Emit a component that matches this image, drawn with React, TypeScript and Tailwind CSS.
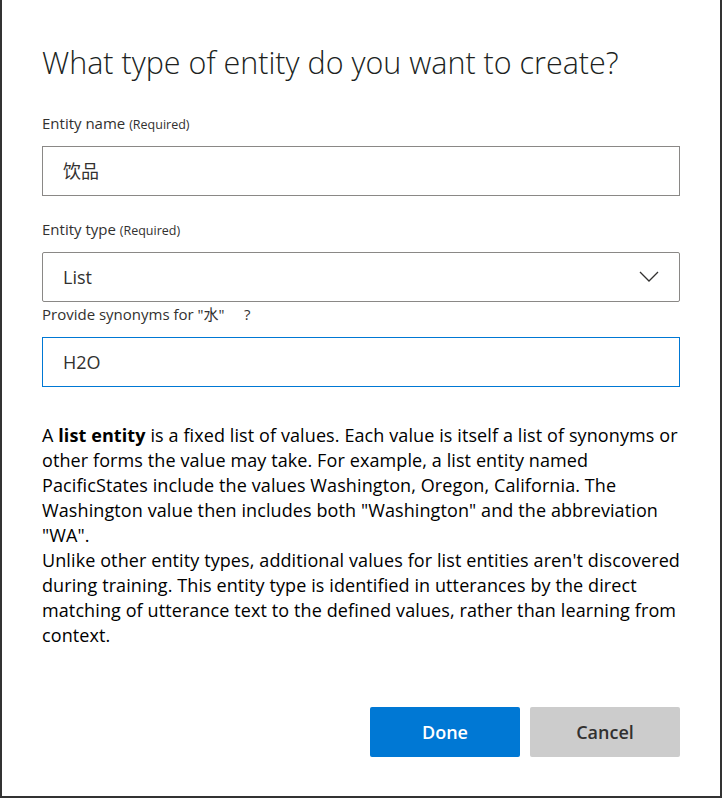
import React from "react";

const font = { fontFamily: '"Open Sans", "Noto Sans", "Noto Sans CJK SC", sans-serif' };

export default function App() {
  return (
    <div className="w-[722px] h-[798px] bg-white" style={font}>
      <div className="w-full h-full border-x-2 border-b-2 border-[#333333] box-border px-[40px] flex flex-col text-[#323130]">
        <h1 className="mt-[43px] text-[30.5px] leading-[38px] font-light text-[#201f1e] whitespace-nowrap">
          What type of entity do you want to create?
        </h1>
        <div className="mt-[32px] text-[15px] leading-[20px] h-[20px]">
          Entity name <span className="text-[12.5px] leading-none">(Required)</span>
        </div>
        <div className="mt-[13px] h-[50px] border border-[#8a8886] flex items-center px-[20px] text-[18px]">
          饮品
        </div>
        <div className="mt-[23px] text-[15px] leading-[20px] h-[20px]">
          Entity type <span className="text-[12.5px] leading-none">(Required)</span>
        </div>
        <div className="mt-[13px] h-[50px] border border-[#8a8886] rounded-[2px] flex items-center justify-between pl-[20px] pr-[20px] text-[18px]">
          <span>List</span>
          <svg width="20" height="12" viewBox="0 0 20 12" fill="none">
            <path d="M1 1 L10 10 L19 1" stroke="#323130" strokeWidth="1.3" />
          </svg>
        </div>
        <div className="mt-[2px] text-[15px] leading-[20px] h-[20px]">
          Provide synonyms for "水"&nbsp;&nbsp;&nbsp;&nbsp;&nbsp;?
        </div>
        <div className="mt-[13px] h-[50px] border border-[#0078d4] flex items-center px-[20px] text-[18px]">
          H2O
        </div>
        <p className="mt-[36px] text-[18px] tracking-[0.1px] leading-[25px] text-[#000000]">
          A <b>list entity</b> is a fixed list of values. Each value is itself a list of synonyms or other forms the value may take. For example, a list entity named PacificStates include the values Washington, Oregon, California. The Washington value then includes both "Washington" and the abbreviation "WA".
          <br />
          Unlike other entity types, additional values for list entities aren't discovered during training. This entity type is identified in utterances by the direct matching of utterance text to the defined values, rather than learning from context.
        </p>
        <div className="mt-auto mb-[39px] flex justify-end gap-[10px]">
          <button className="w-[150px] h-[50px] rounded-[2px] bg-[#0078d4] text-white text-[18px] font-semibold">Done</button>
          <button className="w-[150px] h-[50px] rounded-[2px] bg-[#cccccc] text-[#323130] text-[18px] font-semibold">Cancel</button>
        </div>
      </div>
    </div>
  );
}
